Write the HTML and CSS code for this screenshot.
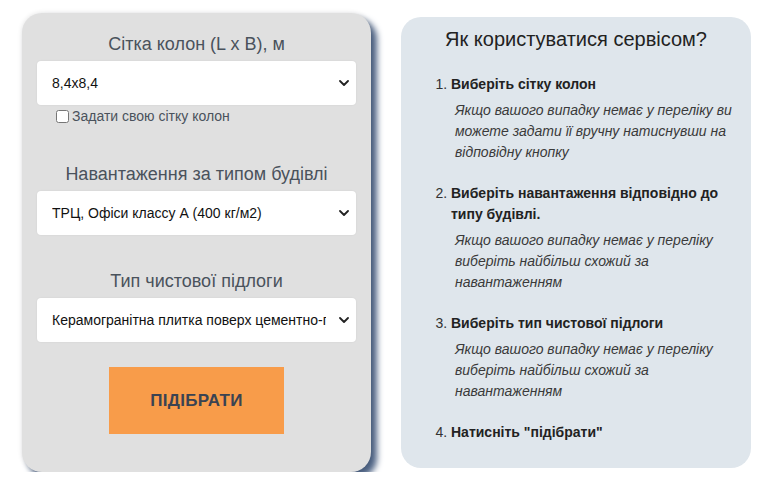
FILE: index.html
```html
<!DOCTYPE html>
<html lang="uk">
<head>
<meta charset="utf-8">
<link rel="stylesheet" href="styles.css">
</head>
<body>
<div class="page">
  <form class="calc">
    <div class="field field-grid">
      <label class="label">Сітка колон (L x B), м</label>
      <div class="select-wrap">
        <select class="select"><option>8,4x8,4</option></select>
        <svg class="chev" viewBox="0 0 10 6" width="10" height="6"><path d="M1 1l4 4 4-4" fill="none" stroke="#222" stroke-width="1.8" stroke-linecap="round" stroke-linejoin="round"/></svg>
      </div>
      <label class="check"><input type="checkbox" class="checkbox"> Задати свою сітку колон</label>
    </div>
    <div class="field field-load">
      <label class="label">Навантаження за типом будівлі</label>
      <div class="select-wrap">
        <select class="select"><option>ТРЦ, Офіси классу А (400 кг/м2)</option></select>
        <svg class="chev" viewBox="0 0 10 6" width="10" height="6"><path d="M1 1l4 4 4-4" fill="none" stroke="#222" stroke-width="1.8" stroke-linecap="round" stroke-linejoin="round"/></svg>
      </div>
    </div>
    <div class="field field-floor">
      <label class="label">Тип чистової підлоги</label>
      <div class="select-wrap">
        <select class="select"><option>Керамогранітна плитка поверх цементно-піщаної стяжки</option></select>
        <svg class="chev" viewBox="0 0 10 6" width="10" height="6"><path d="M1 1l4 4 4-4" fill="none" stroke="#222" stroke-width="1.8" stroke-linecap="round" stroke-linejoin="round"/></svg>
      </div>
    </div>
    <button type="button" class="btn">ПІДІБРАТИ</button>
  </form>
  <div class="help">
    <h2 class="help-title">Як користуватися сервісом?</h2>
    <ol class="steps">
      <li class="step"><b>Виберіть сітку колон</b>
        <p class="note">Якщо вашого випадку немає у переліку ви можете задати її вручну натиснувши на відповідну кнопку</p></li>
      <li class="step"><b>Виберіть навантаження відповідно до типу будівлі.</b>
        <p class="note">Якщо вашого випадку немає у переліку виберіть найбільш схожий за навантаженням</p></li>
      <li class="step"><b>Виберіть тип чистової підлоги</b>
        <p class="note">Якщо вашого випадку немає у переліку виберіть найбільш схожий за навантаженням</p></li>
      <li class="step"><b>Натисніть "підібрати"</b></li>
    </ol>
  </div>
</div>
</body>
</html>
```
FILE: styles.css
```css
* { box-sizing: border-box; }
html, body { margin: 0; background: #fff; }
body { font-family: "Liberation Sans", Arial, sans-serif; }
.page {
  display: flex;
  align-items: flex-start;
  padding: 13px 0 0 22px;
  gap: 30px;
}
.calc {
  width: 349px;
  height: 459px;
  background: #e0e0e0;
  border-radius: 20px;
  box-shadow: 0 0 5px rgba(0,0,0,0.12), 6px 6px 6px #4e6384;
  padding: 15px 15px 0;
  display: flex;
  flex-direction: column;
  align-items: center;
}
.field { width: 100%; display: flex; flex-direction: column; align-items: stretch; }
.field-load { margin-top: 33px; }
.field-floor { margin-top: 30px; }
.label {
  text-align: center;
  font-size: 18px;
  color: #4a525c;
  line-height: 33px;
}
.select-wrap { position: relative; margin-top: 0; }
.select {
  appearance: none;
  -webkit-appearance: none;
  width: 100%;
  height: 44px;
  border: none;
  border-radius: 4px;
  background: #fff;
  font-family: "Liberation Sans", Arial, sans-serif;
  font-size: 14px;
  color: #111;
  padding: 0 30px 0 15px;
  box-shadow: 0 0 2px rgba(0,0,0,0.08);
}
.chev { position: absolute; right: 7px; top: 19px; pointer-events: none; }
.check {
  display: flex;
  align-items: center;
  gap: 3px;
  margin: 4px 0 2px 19px;
  font-size: 14px;
  color: #4a525c;
  height: 14px;
}
.checkbox { margin: 0; width: 13px; height: 13px; }
.btn {
  margin-top: 25px;
  width: 175px;
  height: 67px;
  border: none;
  background: #f89c4a;
  font-family: "Liberation Sans", Arial, sans-serif;
  font-weight: bold;
  font-size: 17px;
  color: #3a4352;
  letter-spacing: 0.3px;
}
.help {
  margin-top: 4px;
  width: 350px;
  height: 451px;
  background: #dfe6ec;
  border-radius: 20px;
  padding: 11px 10px 0 20px;
}
.help-title {
  margin: 0;
  text-align: center;
  font-weight: normal;
  font-size: 20px;
  color: #222;
  line-height: 23px;
  padding-right: 10px;
}
.steps {
  margin: 23px 0 0;
  padding-left: 30px;
  font-size: 14px;
  line-height: 21px;
  color: #333;
}
.step b { color: #222; }
.step + .step { margin-top: 20px; }
.note {
  margin: 5px 0 0 4px;
  font-style: italic;
  color: #3a3a3a;
}
```
